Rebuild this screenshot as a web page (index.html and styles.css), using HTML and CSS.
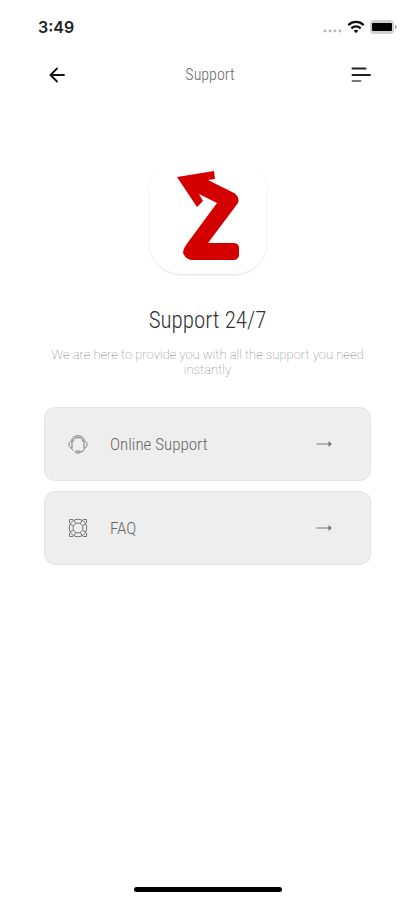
FILE: index.html
```html
<!DOCTYPE html>
<html lang="en">
<head>
<meta charset="utf-8">
<meta name="viewport" content="width=device-width, initial-scale=1.0">
<title>Support</title>
<link rel="stylesheet" href="styles.css">
</head>
<body>
<div class="status-bar">
  <span class="time">3:49</span>
  <div class="status-icons">
    <svg width="20" height="12" viewBox="0 0 20 12" fill="#b5b5b5"><circle cx="3" cy="10" r="1.4"/><circle cx="8" cy="10" r="1.4"/><circle cx="13" cy="10" r="1.4"/><circle cx="18" cy="10" r="1.4"/></svg>
    <svg width="18" height="14" viewBox="0 0 18 14" fill="none" stroke="#111" stroke-width="2.2"><path d="M1.3 5.1a11 11 0 0 1 15.4 0"/><path d="M4.3 8.4a6.7 6.7 0 0 1 9.4 0"/><path d="M9 13.2l-2.2-2.4a3.2 3.2 0 0 1 4.4 0z" fill="#111" stroke="none"/></svg>
    <svg width="27" height="14" viewBox="0 0 27 14"><rect x="0" y="0" width="24" height="14" rx="4" fill="#cfcfcf"/><path d="M25 4.5c2 .8 2 4.2 0 5z" fill="#999"/><rect x="2" y="3" width="20" height="8" rx="1" fill="#000"/></svg>
  </div>
</div>

<header class="nav">
  <button class="nav-btn" aria-label="Back">
    <svg width="16" height="16" viewBox="0 0 16 16" fill="none" stroke="#111" stroke-width="1.8" stroke-linecap="round" stroke-linejoin="round"><path d="M15 8H1.5M8 1.5L1.5 8 8 14.5"/></svg>
  </button>
  <h1>Support</h1>
  <button class="nav-btn" aria-label="Menu">
    <svg width="20" height="16" viewBox="0 0 20 16" fill="none" stroke-width="2" stroke-linecap="round"><path d="M1.5 1.5h13M1.5 8h17.5" stroke="#222"/><path d="M1.5 14h8" stroke="#777"/></svg>
  </button>
</header>

<main>
  <div class="logo">
    <svg width="118" height="118" viewBox="0 0 118 118" fill="#d40000"><path d="M28 21L65 15L66 23L59 24L85 37Q91 41 89 47L59 87H84Q90 87 90 92V98Q90 104 84 104H44Q37 104 34 97Q34 93 37 89L68 47L50 38L54 45L48 51Z"/></svg>
  </div>
  <h2>Support 24/7</h2>
  <p class="intro">We are here to provide you with all the support you need instantly</p>

  <nav class="options">
    <a href="#online" class="option">
      <svg width="20" height="20" viewBox="0 0 20 20" fill="none" stroke="#777"><path d="M3.5 6.5C5 .2 15 .2 16.5 6.5"/><path d="M5 7C5.5 2.5 14.5 2.5 15 7"/><path d="M5.5 7.5C2.5 6.500 1 8 1 10.500S2.500 14.500 4.500 13.500M14.500 7.500C17.500 6.500 19 8 19 10.500S17.500 14.500 15.500 13.500"/><path d="M4 8v5M16 8v5"/><path d="M16.500 13.800c-.5 2.700-2 4.200-4.500 4.200"/><path d="M3.500 13.800c.3 1.300 1 2.200 2 2.900"/><rect x="7.500" y="17" width="4.500" height="2" rx="1"/></svg>
      <span>Online Support</span>
      <svg class="arrow" width="17" height="8" viewBox="0 0 17 8"><path d="M.5 4H15" stroke="#777"/><path d="M12.5 1l3.5 3-3.5 3z" fill="#777"/></svg>
    </a>
    <a href="#faq" class="option">
      <svg width="20" height="20" viewBox="0 0 20 20" fill="none" stroke="#777"><circle cx="10" cy="10" r="8.8"/><circle cx="10" cy="10" r="5"/><path d="M7.5 5.5L6 2M12.5 5.5L14 2M7.5 14.5L6 18M12.5 14.5L14 18M5.5 7.5L2 6M5.5 12.5L2 14M14.5 7.5L18 6M14.5 12.5L18 14"/><path d="M1.5 5V1.5H5M15 1.5h3.5V5M1.5 15v3.5H5M15 18.5h3.5V15"/></svg>
      <span>FAQ</span>
      <svg class="arrow" width="17" height="8" viewBox="0 0 17 8"><path d="M.5 4H15" stroke="#777"/><path d="M12.5 1l3.5 3-3.5 3z" fill="#777"/></svg>
    </a>
  </nav>
</main>

<div class="home-indicator"></div>
</body>
</html>
```

FILE: styles.css
```css
* {
  box-sizing: border-box;
}
body {
  margin: 0;
  min-height: 100vh;
  display: flex;
  flex-direction: column;
  background: #fff;
  color: #333;
  font-family: "Roboto Condensed", Roboto, sans-serif;
  font-weight: 300;
}
.status-bar {
  display: flex;
  justify-content: space-between;
  align-items: center;
  height: 54px;
  padding: 0 18px 0 38px;
}
.time {
  font-family: Inter, sans-serif;
  font-size: 16px;
  font-weight: 600;
  color: #222;
}
.status-icons {
  display: flex;
  align-items: center;
  gap: 5px;
}
.nav {
  display: flex;
  align-items: center;
  height: 42px;
  padding: 0 44px 0 49px;
}
.nav-btn {
  display: flex;
  width: 20px;
  padding: 0;
  border: none;
  background: none;
  cursor: pointer;
}
.nav h1 {
  flex: 1;
  margin: 0;
  font-size: 16px;
  font-weight: 300;
  line-height: 20px;
  text-align: center;
  color: #666;
}
main {
  flex: 1;
  padding: 60px 44px 0;
  text-align: center;
}
.logo {
  width: 118px;
  height: 118px;
  margin: 0 auto;
  border-radius: 32px;
  box-shadow: 0 1px 2px rgba(0,0,0,0.12);
}
.logo svg {
  display: block;
}
h2 {
  margin: 33px 0 12px;
  font-size: 23px;
  font-weight: 300;
  line-height: 28px;
}
.intro {
  margin: 0;
  font-family: Roboto, sans-serif;
  font-size: 13px;
  font-weight: 100;
  line-height: 15px;
  color: #777;
}
.options {
  display: flex;
  flex-direction: column;
  gap: 10px;
  margin-top: 30px;
}
.option {
  display: flex;
  align-items: center;
  gap: 22px;
  height: 74px;
  padding: 0 37px 0 23px;
  background: #eee;
  border: 1px solid #e4e4e4;
  border-radius: 11px;
  color: #666;
  font-size: 17px;
  text-decoration: none;
}
.arrow {
  margin-left: auto;
}
.home-indicator {
  width: 148px;
  height: 5px;
  margin: 0 auto 8px;
  border-radius: 3px;
  background: #000;
}
```
